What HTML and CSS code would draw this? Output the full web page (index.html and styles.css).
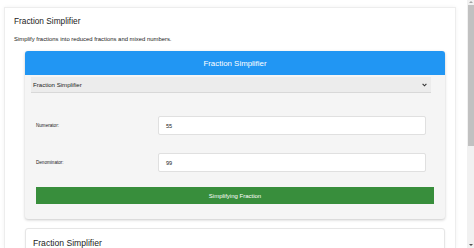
FILE: index.html
```html
<!DOCTYPE html>
<html lang="en">
<head>
<meta charset="utf-8">
<title>Fraction Simplifier</title>
<link rel="stylesheet" href="styles.css">
</head>
<body>
<div class="page">
  <h1 class="title">Fraction Simplifier</h1>
  <p class="desc">Simplify fractions into reduced fractions and mixed numbers.</p>
  <div class="card">
    <div class="card-head">Fraction Simplifier</div>
    <div class="card-body">
      <div class="select">
        <span>Fraction Simplifier</span>
        <svg class="chev" width="5" height="4" viewBox="0 0 5 4"><path d="M0.6 0.8 L2.5 2.8 L4.4 0.8" fill="none" stroke="#333" stroke-width="1.1"/></svg>
      </div>
      <div class="form">
        <label class="lbl">Numerator:</label>
        <div class="inp">55</div>
        <label class="lbl">Denominator:</label>
        <div class="inp">99</div>
      </div>
      <div class="btn">Simplifying Fraction</div>
    </div>
  </div>
  <div class="card2">
    <h2 class="card2-title">Fraction Simplifier</h2>
  </div>
</div>
<div class="scrollbar">
  <div class="arrow up"></div>
  <div class="thumb"></div>
  <div class="arrow down"></div>
</div>
</body>
</html>
```
FILE: styles.css
```css
html, body {
  margin: 0;
  padding: 0;
  overflow: hidden;
  background: #ffffff;
}
body {
  font-family: "Liberation Sans", Arial, sans-serif;
  color: #333;
  width: 474px;
  height: 248px;
}
.page {
  box-sizing: border-box;
  margin: 7px 0 0 4px;
  width: 452px;
  height: 241px;
  overflow: hidden;
  border: 1px solid #ededed;
  border-bottom: none;
  box-shadow: 0 0 4px rgba(0,0,0,0.05);
  padding: 8px 10px 0 9px;
  display: flex;
  flex-direction: column;
}
.title {
  margin: 0;
  font-size: 8.3px;
  line-height: 10px;
  font-weight: normal;
  color: #222;
}
.desc {
  margin: 9px 0 0 0;
  font-size: 5.9px;
  line-height: 8px;
  color: #222;
}
.card {
  flex-shrink: 0;
  margin: 8px 0 0 11px;
  background: #f5f5f5;
  border-radius: 3px;
  box-shadow: 0 1px 3px rgba(0,0,0,0.22);
  display: flex;
  flex-direction: column;
}
.card-head {
  height: 24px;
  background: #2196f3;
  color: #fff;
  font-size: 7.9px;
  display: flex;
  align-items: center;
  justify-content: center;
  border-radius: 3px 3px 0 0;
}
.card-body {
  padding: 2px 11px 15px 11px;
  display: flex;
  flex-direction: column;
}
.select {
  margin: 0 3px 0 -5px;
  height: 16px;
  box-sizing: border-box;
  background: #ececec;
  border-bottom: 1px solid #d8d8d8;
  font-size: 6.1px;
  color: #222;
  display: flex;
  align-items: center;
  justify-content: space-between;
  padding: 0 4px 0 2px;
}
.chev { display: block; }
.form {
  margin-top: 23px;
  display: grid;
  grid-template-columns: 122px 268px;
  row-gap: 18px;
  align-items: center;
}
.lbl {
  font-size: 4.6px;
  color: #222;
}
.inp {
  box-sizing: border-box;
  height: 19px;
  background: #fff;
  border: 1px solid #e0e0e0;
  border-radius: 2px;
  font-size: 5.6px;
  color: #222;
  display: flex;
  align-items: center;
  padding-left: 7px;
}
.btn {
  margin-top: 15px;
  height: 17px;
  background: #388e3c;
  color: #fff;
  font-size: 6px;
  display: flex;
  align-items: center;
  justify-content: center;
}
.card2 {
  flex-shrink: 0;
  margin: 9px 0 0 11px;
  background: #fff;
  border: 1px solid #e6e6e6;
  border-radius: 3px;
  box-shadow: 0 1px 2px rgba(0,0,0,0.08);
  padding: 9px 8px 20px 7px;
}
.card2-title {
  margin: 0;
  font-size: 8.6px;
  line-height: 10px;
  font-weight: normal;
  color: #222;
}
.scrollbar {
  position: fixed;
  top: 0;
  right: 0;
  width: 7px;
  height: 248px;
  background: #f1f1f1;
  display: flex;
  flex-direction: column;
  align-items: center;
}
.thumb {
  width: 6px;
  margin-left: 1px;
  height: 141px;
  background: #c1c1c1;
}
.arrow {
  width: 0;
  height: 0;
  border-left: 2px solid transparent;
  border-right: 2px solid transparent;
}
.arrow.up {
  margin: 1px 0 2px 0;
  border-bottom: 2px solid #a3a3a3;
}
.arrow.down {
  margin-top: auto;
  margin-bottom: 2px;
  border-top: 2px solid #505050;
}
```
